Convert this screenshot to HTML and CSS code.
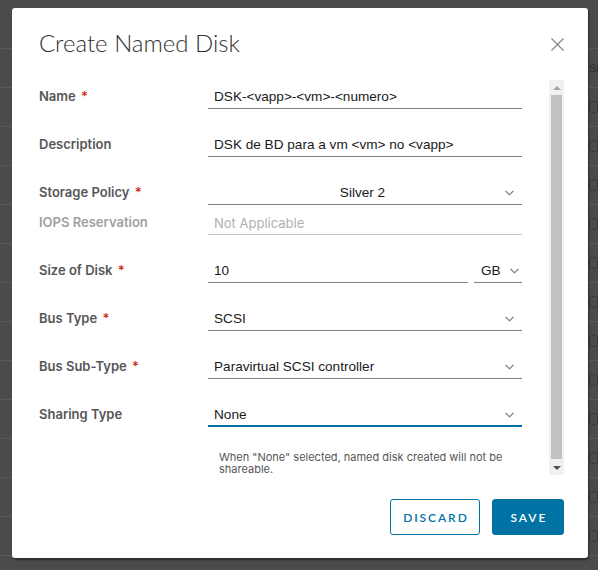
FILE: index.html
```html
<!DOCTYPE html>
<html lang="en">
<head>
<meta charset="utf-8">
<title>Create Named Disk</title>
<link rel="stylesheet" href="styles.css">
</head>
<body>
<div class="page">
  <div class="page-row"></div>
  <div class="page-row page-row-head"><span class="page-col">St</span></div>
  <div class="page-row"><span class="page-icon"></span></div>
  <div class="page-row"><span class="page-icon"></span></div>
  <div class="page-row"><span class="page-icon"></span></div>
  <div class="page-row"><span class="page-icon"></span></div>
  <div class="page-row"><span class="page-icon"></span></div>
  <div class="page-row"><span class="page-icon"></span></div>
  <div class="page-row"><span class="page-icon"></span></div>
  <div class="page-row"><span class="page-icon"></span></div>
  <div class="page-row"><span class="page-icon"></span></div>
  <div class="page-row"><span class="page-icon"></span></div>
  <div class="page-row"><span class="page-icon"></span></div>
  <div class="page-row"><span class="page-icon"></span></div>
</div>

<div class="modal" role="dialog">
  <header class="modal-header">
    <h3 class="modal-title">Create Named Disk</h3>
    <button class="close" aria-label="Close">
      <svg width="13" height="13" viewBox="0 0 13 13"><path d="M0.5 0.5 L12.5 12.5 M12.5 0.5 L0.5 12.5" stroke="#8a8a8a" stroke-width="1.3" fill="none"/></svg>
    </button>
  </header>

  <div class="modal-body">
    <form class="form">
      <div class="row">
        <label class="label">Name <span class="req">*</span></label>
        <div class="field"><span class="value">DSK-&lt;vapp&gt;-&lt;vm&gt;-&lt;numero&gt;</span></div>
      </div>
      <div class="row">
        <label class="label">Description</label>
        <div class="field"><span class="value">DSK de BD para a vm &lt;vm&gt; no &lt;vapp&gt;</span></div>
      </div>
      <div class="row">
        <label class="label">Storage Policy <span class="req">*</span></label>
        <div class="field select"><span class="value centered">Silver 2</span><svg class="chev" width="9" height="6" viewBox="0 0 9 6"><path d="M0.5 0.8 L4.5 4.8 L8.5 0.8" stroke="#6f6f6f" stroke-width="1.1" fill="none"/></svg></div>
      </div>
      <div class="row row-tight">
        <label class="label disabled">IOPS Reservation</label>
        <div class="field field-disabled"><span class="placeholder">Not Applicable</span></div>
      </div>
      <div class="row">
        <label class="label">Size of Disk <span class="req">*</span></label>
        <div class="field-group">
          <div class="field grow"><span class="value">10</span></div>
          <div class="field select unit"><span class="value">GB</span><svg class="chev" width="9" height="6" viewBox="0 0 9 6"><path d="M0.5 0.8 L4.5 4.8 L8.5 0.8" stroke="#6f6f6f" stroke-width="1.1" fill="none"/></svg></div>
        </div>
      </div>
      <div class="row">
        <label class="label">Bus Type <span class="req">*</span></label>
        <div class="field select"><span class="value">SCSI</span><svg class="chev" width="9" height="6" viewBox="0 0 9 6"><path d="M0.5 0.8 L4.5 4.8 L8.5 0.8" stroke="#6f6f6f" stroke-width="1.1" fill="none"/></svg></div>
      </div>
      <div class="row">
        <label class="label">Bus Sub-Type <span class="req">*</span></label>
        <div class="field select"><span class="value">Paravirtual SCSI controller</span><svg class="chev" width="9" height="6" viewBox="0 0 9 6"><path d="M0.5 0.8 L4.5 4.8 L8.5 0.8" stroke="#6f6f6f" stroke-width="1.1" fill="none"/></svg></div>
      </div>
      <div class="row">
        <label class="label">Sharing Type</label>
        <div class="field select focused"><span class="value">None</span><svg class="chev" width="9" height="6" viewBox="0 0 9 6"><path d="M0.5 0.8 L4.5 4.8 L8.5 0.8" stroke="#6f6f6f" stroke-width="1.1" fill="none"/></svg></div>
      </div>
      <div class="row row-helper">
        <span></span>
        <p class="helper">When "None" selected, named disk created will not be shareable.</p>
      </div>
    </form>

    <div class="scrollbar" aria-hidden="true">
      <div class="sb-btn"><span class="arrow-up"></span></div>
      <div class="sb-track"><div class="sb-thumb"></div></div>
      <div class="sb-btn"><span class="arrow-down"></span></div>
    </div>
  </div>

  <footer class="modal-footer">
    <button class="btn btn-outline">DISCARD</button>
    <button class="btn btn-primary">SAVE</button>
  </footer>
</div>
</body>
</html>
```

FILE: styles.css
```css
* { box-sizing: border-box; }

html, body {
  margin: 0;
  padding: 0;
}

body {
  width: 598px;
  height: 570px;
  overflow: hidden;
  background: #4b4b4b;
  font-family: Inter, "Liberation Sans", sans-serif;
  position: relative;
}

/* dimmed page behind the dialog */
.page {
  display: flex;
  flex-direction: column;
  padding-top: 10px;
}

.page-row {
  height: 39px;
  border-bottom: 1px solid #585858;
  display: flex;
  align-items: center;
  padding-left: 589px;
}

.page-col {
  font-family: "Liberation Sans", sans-serif;
  font-size: 11px;
  color: #2e2e2e;
  white-space: nowrap;
}

.page-icon {
  width: 12px;
  height: 12px;
  border: 1px solid #3a3a3a;
  border-radius: 3px;
}

/* dialog */
.modal {
  position: absolute;
  top: 8px;
  left: 12px;
  width: 576px;
  height: 550px;
  background: #fff;
  border-radius: 3px;
  box-shadow: 1px 2px 2px rgba(0, 0, 0, 0.45);
  display: flex;
  flex-direction: column;
}

.modal-header {
  display: flex;
  justify-content: space-between;
  align-items: flex-start;
  padding: 21px 24px 23px 27px;
  height: 72px;
}

.modal-title {
  margin: 0;
  font-family: Lato, sans-serif;
  font-weight: 300;
  font-size: 24px;
  line-height: 28px;
  color: #313131;
}

.close {
  border: 0;
  background: none;
  padding: 0;
  margin-top: 9px;
  width: 13px;
  height: 13px;
  display: block;
}

.close svg { display: block; }

.modal-body {
  display: flex;
  height: 395px;
  padding: 0 24px 0 27px;
}

.form {
  flex: 1;
  display: flex;
  flex-direction: column;
  padding-top: 5px;
  margin: 0;
}

.row {
  display: grid;
  grid-template-columns: 169px 314px;
  align-items: center;
  margin-bottom: 24px;
}

.row-tight { margin-top: -18px; }

.label {
  font-family: Inter, sans-serif;
  font-weight: 600;
  font-size: 13px;
  color: #565656;
  padding-bottom: 3px;
}

.label.disabled { color: #a0a0a0; }

.req {
  color: #d02b1c;
  margin-left: 2px;
}

.field {
  height: 24px;
  border-bottom: 1px solid #7e858a;
  display: flex;
  align-items: center;
  padding: 0 6px;
}

.field-disabled { border-bottom-color: #c4c4c4; }

.value {
  font-family: "Liberation Sans", Arial, sans-serif;
  font-size: 13.6px;
  color: #1a1a1a;
  white-space: nowrap;
}

.value.centered {
  flex: 1;
  text-align: center;
  padding-left: 6px;
}

.placeholder {
  font-family: Inter, sans-serif;
  font-size: 13px;
  color: #b0b0b0;
}

.select {
  justify-content: space-between;
  padding-right: 8px;
}

.chev { display: block; flex: none; }

.focused {
  border-bottom: 2px solid #0072a3;
  padding-top: 1px;
}

.field-group {
  display: flex;
  gap: 6px;
}

.grow { flex: 1; }

.unit {
  width: 48px;
  padding-left: 7px;
  padding-right: 3px;
}

.row-helper {
  margin-bottom: 0;
}

.helper {
  margin: 0;
  padding-left: 11px;
  padding-right: 10px;
  font-family: Inter, sans-serif;
  font-size: 11px;
  line-height: 12px;
  color: #565656;
}

/* scrollbar */
.scrollbar {
  width: 15px;
  flex: none;
  background: #f1f1f1;
  display: flex;
  flex-direction: column;
}

.sb-btn {
  height: 15px;
  display: flex;
  align-items: center;
  justify-content: center;
}

.arrow-up {
  width: 0;
  height: 0;
  border-left: 4px solid transparent;
  border-right: 4px solid transparent;
  border-bottom: 4px solid #a3a3a3;
}

.arrow-down {
  width: 0;
  height: 0;
  border-left: 4px solid transparent;
  border-right: 4px solid transparent;
  border-top: 4px solid #505050;
}

.sb-track {
  flex: 1;
  padding: 0 2px;
}

.sb-thumb {
  height: 364px;
  background: #c1c1c1;
}

/* footer */
.modal-footer {
  display: flex;
  justify-content: flex-end;
  gap: 12px;
  padding: 24px 24px 23px;
}

.btn {
  height: 36px;
  border-radius: 3px;
  font-family: Lato, sans-serif;
  font-weight: 600;
  font-size: 12px;
  letter-spacing: 0.16em;
  padding: 0 0 0 0.16em;
}

.btn-outline {
  width: 90px;
  background: #fff;
  border: 1px solid #0072a3;
  color: #0072a3;
}

.btn-primary {
  width: 72px;
  background: #0072a3;
  border: 1px solid #0072a3;
  color: #fff;
}
```
